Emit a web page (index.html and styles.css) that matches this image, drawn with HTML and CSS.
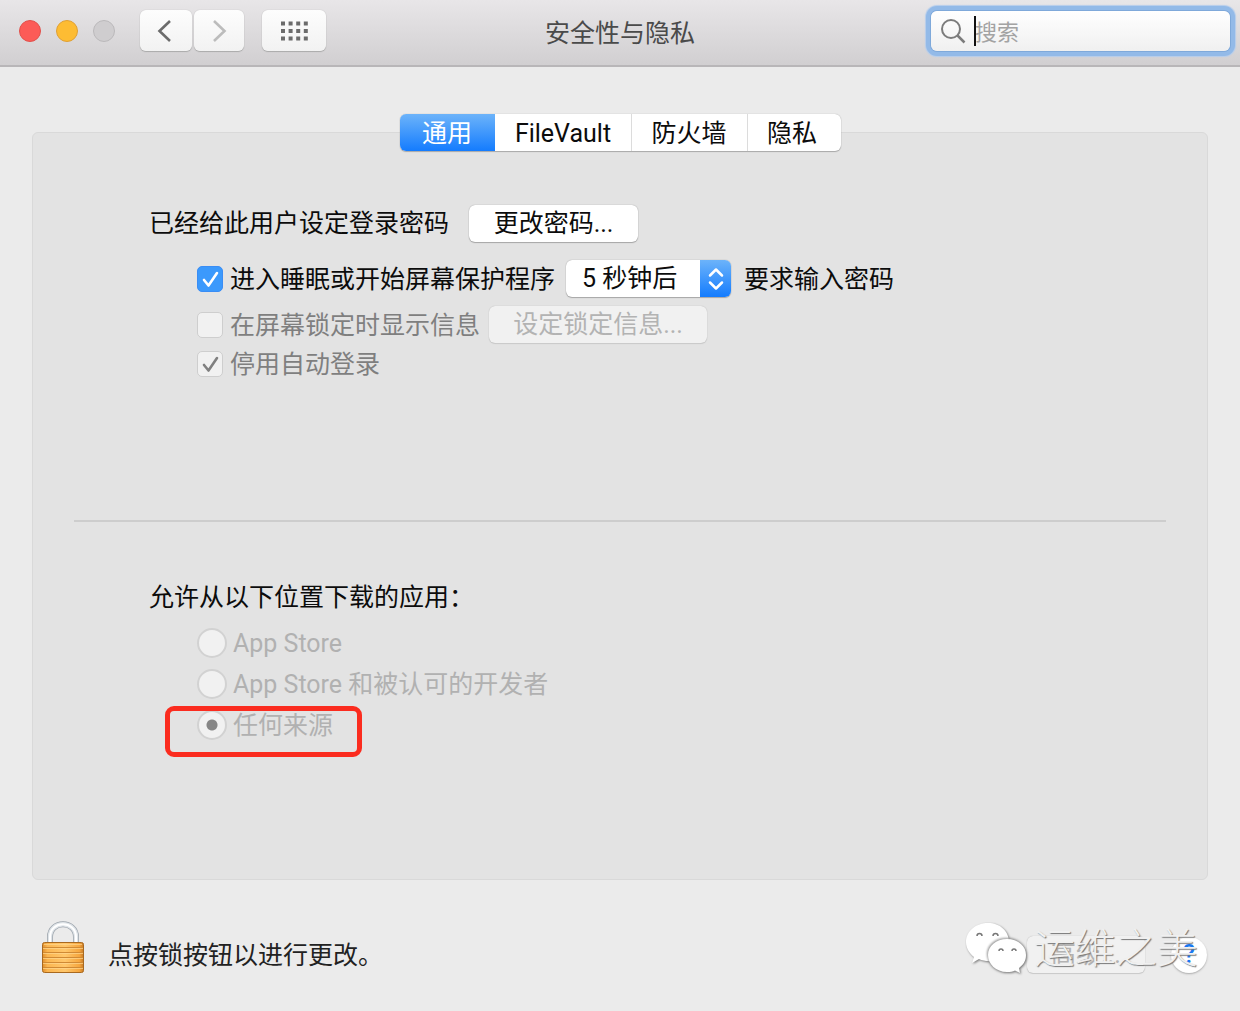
FILE: index.html
```html
<!DOCTYPE html>
<html lang="zh-CN">
<head>
<meta charset="utf-8">
<title>安全性与隐私</title>
<link rel="stylesheet" href="styles.css">
</head>
<body>
<header class="toolbar">
  <div class="toolbar-left">
    <div class="lights">
      <button class="light light-close" aria-label="关闭"></button>
      <button class="light light-min" aria-label="最小化"></button>
      <button class="light light-zoom" aria-label="缩放" disabled></button>
    </div>
    <div class="nav">
      <button class="tool tool-back" aria-label="后退"><svg width="20" height="26" viewBox="0 0 20 26"><path d="M14 3 3.500 13 14 23" fill="none" stroke="#6b6b6b" stroke-width="2.600"/></svg></button>
      <button class="tool tool-next" aria-label="前进" disabled><svg width="16" height="26" viewBox="0 0 16 26"><path d="M3 3 13.500 13 3 23" fill="none" stroke="#bcbcbc" stroke-width="2.600"/></svg></button>
    </div>
    <button class="tool tool-all" aria-label="全部显示"><svg width="28" height="20" viewBox="0 0 28 20"><path d="M1 2.500H28M1 10H28M1 17.500H28" fill="none" stroke="#6b6b6b" stroke-width="4" stroke-dasharray="4 3.600"/></svg></button>
  </div>
  <h1 class="title">安全性与隐私</h1>
  <div class="search">
    <svg class="search-icon" width="26" height="26" viewBox="0 0 26 26"><circle cx="10" cy="11" r="9" fill="none" stroke="#7c7c7c" stroke-width="2"/><path d="M16.500 17.500 23.500 24.500" stroke="#7c7c7c" stroke-width="2.500"/></svg>
    <input class="search-input" type="text" placeholder="搜索" aria-label="搜索">
    <span class="caret"></span>
  </div>
</header>

<main class="content">
  <nav class="tabs">
    <button class="tab tab-active">通用</button>
    <button class="tab tab-wide">FileVault</button>
    <button class="tab tab-mid">防火墙</button>
    <button class="tab tab-last">隐私</button>
  </nav>

  <div class="panel">
    <section class="section login">
      <div class="row row-first">
        <span>已经给此用户设定登录密码</span>
        <button class="button change">更改密码...</button>
      </div>
      <div class="row option row-sleep">
        <input class="check" type="checkbox" id="sleep" checked>
        <label class="label" for="sleep">进入睡眠或开始屏幕保护程序</label>
        <span class="popup">
          <select class="popup-select" aria-label="要求输入密码的时间"><option>5 秒钟后</option></select>
          <span class="popup-arrows"><svg width="16" height="24" viewBox="0 0 16 24"><path d="M2 8.500 8 2.500 14 8.500M2 15.500 8 21.500 14 15.500" fill="none" stroke="#fff" stroke-width="2.500" stroke-linecap="round" stroke-linejoin="round"/></svg></span>
        </span>
        <span class="after-popup">要求输入密码</span>
      </div>
      <div class="row option row-message">
        <input class="check" type="checkbox" id="message" disabled>
        <label class="label dim" for="message">在屏幕锁定时显示信息</label>
        <button class="button lock-message" disabled>设定锁定信息...</button>
      </div>
      <div class="row option row-auto">
        <input class="check" type="checkbox" id="auto" checked disabled>
        <label class="label dim" for="auto">停用自动登录</label>
      </div>
    </section>

    <hr class="divider">

    <section class="section sources">
      <h2 class="heading">允许从以下位置下载的应用：</h2>
      <div class="row option source">
        <input class="radio" type="radio" name="source" id="store" disabled>
        <label class="label faint" for="store">App Store</label>
      </div>
      <div class="row option source">
        <input class="radio" type="radio" name="source" id="known" disabled>
        <label class="label faint" for="known">App Store 和被认可的开发者</label>
      </div>
      <div class="row option source">
        <input class="radio" type="radio" name="source" id="any" checked disabled>
        <label class="label faint" for="any">任何来源</label>
        <span class="highlight"></span>
      </div>
    </section>
  </div>
</main>

<footer class="footer">
  <button class="lock" aria-label="锁">
    <svg width="42" height="52" viewBox="0 0 42 52">
      <defs>
        <linearGradient id="brass" x1="0" x2="1" y1="0" y2="0"><stop offset="0" stop-color="#e08f2c"/><stop offset=".12" stop-color="#fbb651"/><stop offset=".55" stop-color="#ffc76c"/><stop offset=".9" stop-color="#f6a63d"/><stop offset="1" stop-color="#c87a25"/></linearGradient>
      </defs>
      <path d="M8 24V16C8 -1 34 -1 34 16V24" fill="none" stroke="#9ba3ab" stroke-width="6"/>
      <path d="M8 24V16C8 -1 34 -1 34 16V24" fill="none" stroke="#dfe4e8" stroke-width="4.500"/>
      <path d="M8 24V16C8 -1 34 -1 34 16V24" fill="none" stroke="#fff" stroke-width="2"/>
      <rect x=".5" y="21.500" width="41" height="30" rx="2" fill="url(#brass)" stroke="#a9691f"/>
      <path d="M1 26.500H41M1 31.500H41M1 36.500H41M1 41.500H41M1 46.500H41" stroke="#d08a35"/>
      <path d="M2 23.500H40M1 27.500H41M1 32.500H41M1 37.500H41M1 42.500H41M1 47.500H41" stroke="#ffd88f" opacity=".7"/>
    </svg>
  </button>
  <span class="lock-text">点按锁按钮以进行更改。</span>
  <div class="footer-actions">
    <button class="button advanced" disabled>高级...</button>
    <button class="help" aria-label="帮助">?</button>
    <div class="watermark">
      <svg class="bubbles" width="64" height="56" viewBox="0 0 64 56">
        <g fill="#fff">
          <path d="M24 2C12 2 2 10 2 21C2 27 5 32 10 36L8 42L15 38C18 39.500 21 40 25 40C36 39 45 31 45 21C45 10 36 2 24 2Z"/>
          <path class="bubble-front" d="M43 18C32 18 24 25 24 34C24 43 32 51 43 51C46 51 49 50.500 51 49.500L56 52L55 47C59 44 62 40 62 34C62 25 54 18 43 18Z"/>
        </g>
        <g fill="none" stroke="#777" stroke-width="1.500"><path d="M13 15a2.500 2.500 0 0 1 5 0M29 15a2.500 2.500 0 0 1 5 0M35 30a2 2 0 0 1 4 0M48 30a2 2 0 0 1 4 0"/></g>
      </svg>
      <span class="watermark-text">运维之美</span>
    </div>
  </div>
</footer>
</body>
</html>
```
FILE: styles.css
```css
* { box-sizing: border-box; }

body {
  margin: 0;
  min-height: 100vh;
  background: #ebebeb;
  color: #0c0c0c;
  font: 25px/34px Roboto, "Noto Sans CJK SC", sans-serif;
}

button, input, select {
  margin: 0;
  padding: 0;
  border: 0;
  font: inherit;
  color: inherit;
}

/* Toolbar */
.toolbar {
  display: grid;
  grid-template-columns: 1fr auto 1fr;
  align-items: center;
  height: 67px;
  padding: 0 10px 4px;
  background: linear-gradient(#e8e6e8, #d1cfd1);
  border-bottom: 2px solid #b8b6b8;
}
.toolbar-left { display: flex; align-items: center; }
.lights { display: flex; gap: 15px; margin: 0 25px 0 9px; }
.light {
  width: 22px;
  height: 22px;
  border-radius: 50%;
  border: 1px solid #e2504b;
  background: #fc5b57;
}
.light-min { background: #fdbc33; border-color: #e0a034; }
.light-zoom { background: #cfcdcf; border-color: #bbb9bb; }
.nav { display: flex; gap: 2px; margin-right: 18px; }
.tool {
  display: flex;
  align-items: center;
  justify-content: center;
  height: 41px;
  border-radius: 6px;
  background: linear-gradient(#fdfdfd, #f2f2f2);
  box-shadow: 0 0 1px #aaa, 0 1px 1px #aaa;
}
.tool-back { width: 52px; }
.tool-next { width: 50px; }
.tool-all { width: 64px; }
.title { margin: 6px 0 0; font-size: 25px; font-weight: 400; color: #4a4a4a; }
.search {
  position: relative;
  justify-self: end;
  display: flex;
  align-items: center;
  gap: 8px;
  width: 299px;
  height: 40px;
  padding-left: 10px;
  border-radius: 6px;
  background: linear-gradient(#fff, #f0f0f0);
  box-shadow: 0 0 0 1px #7fa9da, 0 0 0 5px #93bae8, 0 0 1px 6px #b5cdec;
}
.search-icon { flex: none; }
.search-input {
  flex: 1;
  min-width: 0;
  height: 38px;
  padding-top: 3px;
  background: none;
  outline: 0;
  font-size: 22px;
}
.search-input::placeholder { color: #a3a3a3; opacity: 1; }
.caret {
  position: absolute;
  left: 43px;
  top: 5px;
  width: 2px;
  height: 30px;
  background: #111;
}

/* Tabs */
.content { padding: 47px 32px 0; }
.tabs {
  position: relative;
  display: flex;
  width: fit-content;
  margin: 0 auto -19px;
  border-radius: 6px;
  background: #fff;
  box-shadow: 0 0 1px #999, 0 1px 1px #aaa;
}
.tab {
  height: 37px;
  padding-top: 2px;
  border-left: 1px solid #dcdcdc;
  background: none;
}
.tab-wide { width: 136px; }
.tab-mid { width: 116px; }
.tab-last { width: 94px; padding-right: 4px; }
.tab-active {
  width: 95px;
  border: 0;
  border-radius: 6px 0 0 6px;
  background: linear-gradient(#6cb3fa, #147cfe);
  color: #fff;
}
.tab-active + .tab { border-left-color: #fff; }

/* Settings panel */
.panel {
  border: 1px solid #d9d9d9;
  border-radius: 6px;
  background: #e3e3e3;
  padding: 72px 41px 128px;
}
.section { padding: 0 75px; }
.row { display: flex; align-items: center; }
.row-first { gap: 20px; margin-bottom: 18px; }
.row-sleep { margin-bottom: 9px; }
.row-message { margin-bottom: 7px; }
.row-auto { height: 28px; }
.option { position: relative; padding-left: 48px; }
.label { margin-left: 7px; padding-top: 2px; }
.dim { color: #7f7f7f; }
.faint { color: #b1b1b1; }
.button {
  height: 37px;
  border-radius: 6px;
  background: #fff;
  box-shadow: 0 0 1px #888, 0 1px 1px #aaa;
}
.button:disabled {
  background: #f1f1f1;
  color: #b3b3b3;
  box-shadow: 0 0 1px #aaa, 0 1px 1px #ccc;
}
.change { width: 169px; }
.lock-message { width: 218px; margin-left: 9px; }
.check {
  appearance: none;
  flex: none;
  width: 26px;
  height: 26px;
  border: 1px solid #cecece;
  border-radius: 5px;
  background: #f1f1f1 center / 24px 24px no-repeat;
}
.check:checked {
  border-color: #3a8df5;
  background-color: #3b99fc;
  background-image: url("data:image/svg+xml,%3Csvg xmlns='http://www.w3.org/2000/svg' viewBox='0 0 24 24'%3E%3Cpath d='M6 13L10.500 18.500L19 6' fill='none' stroke='white' stroke-width='2.600' stroke-linecap='round' stroke-linejoin='round'/%3E%3C/svg%3E");
}
.check:checked:disabled {
  border-color: #cecece;
  background-color: #f1f1f1;
  background-image: url("data:image/svg+xml,%3Csvg xmlns='http://www.w3.org/2000/svg' viewBox='0 0 24 24'%3E%3Cpath d='M6 13L10.500 18.500L19 6' fill='none' stroke='%23808080' stroke-width='2.600' stroke-linecap='round' stroke-linejoin='round'/%3E%3C/svg%3E");
}
.popup { position: relative; display: flex; margin-left: 11px; }
.popup-select {
  appearance: none;
  width: 165px;
  height: 37px;
  padding-left: 16px;
  border-radius: 6px;
  background: #fff;
  box-shadow: 0 0 1px #888, 0 1px 1px #aaa;
}
.popup-arrows {
  position: absolute;
  top: 0;
  right: 0;
  bottom: 0;
  width: 31px;
  display: flex;
  align-items: center;
  justify-content: center;
  border-radius: 0 6px 6px 0;
  background: linear-gradient(#6cb3fa, #147cfe);
  pointer-events: none;
}
.after-popup { margin-left: 13px; padding-top: 2px; }
.divider {
  height: 2px;
  margin: 142px 0 61px;
  border: 0;
  background: #cdcdcd;
}
.heading { margin: 0 0 15px; font-size: 25px; line-height: 30px; font-weight: 400; }
.source { height: 30px; margin-bottom: 11px; }
.source .label { margin-left: 6px; padding-top: 2px; }
.radio {
  appearance: none;
  flex: none;
  width: 30px;
  height: 30px;
  border: 2px solid #d2d2d2;
  border-radius: 50%;
  background: #f1f1f1;
}
.radio:checked { background: radial-gradient(circle, #868686 5px, #f1f1f1 6px); }
.highlight {
  position: absolute;
  left: 16px;
  top: -4px;
  width: 197px;
  height: 51px;
  border: 5px solid #fb2c1f;
  border-radius: 9px;
}

/* Footer */
.footer {
  display: flex;
  align-items: flex-end;
  padding: 41px 33px 36px 42px;
}
.lock { display: flex; background: none; }
.lock-text { margin-left: 24px; color: #222; }
.footer-actions {
  position: relative;
  display: flex;
  align-items: center;
  gap: 26px;
  margin-left: auto;
}
.advanced { width: 118px; text-align: left; padding-left: 24px; }
.help {
  width: 36px;
  height: 36px;
  border-radius: 50%;
  background: #fff;
  box-shadow: 0 1px 2px #aaa;
  color: #1a78f0;
  font-weight: 500;
}
.watermark {
  position: absolute;
  right: 9px;
  bottom: -4px;
  display: flex;
  align-items: flex-start;
  gap: 6px;
  white-space: nowrap;
  pointer-events: none;
}
.bubbles { flex: none; filter: drop-shadow(1px 1px 1px #777); }
.bubble-front { filter: drop-shadow(-1px -1px 1px #999); }
.watermark-text {
  font-family: "Noto Sans CJK SC", sans-serif;
  font-size: 41px;
  line-height: 48px;
  font-weight: 300;
  color: #f0f0f0;
  text-shadow: 1px 1px 1px #777;
}
```
